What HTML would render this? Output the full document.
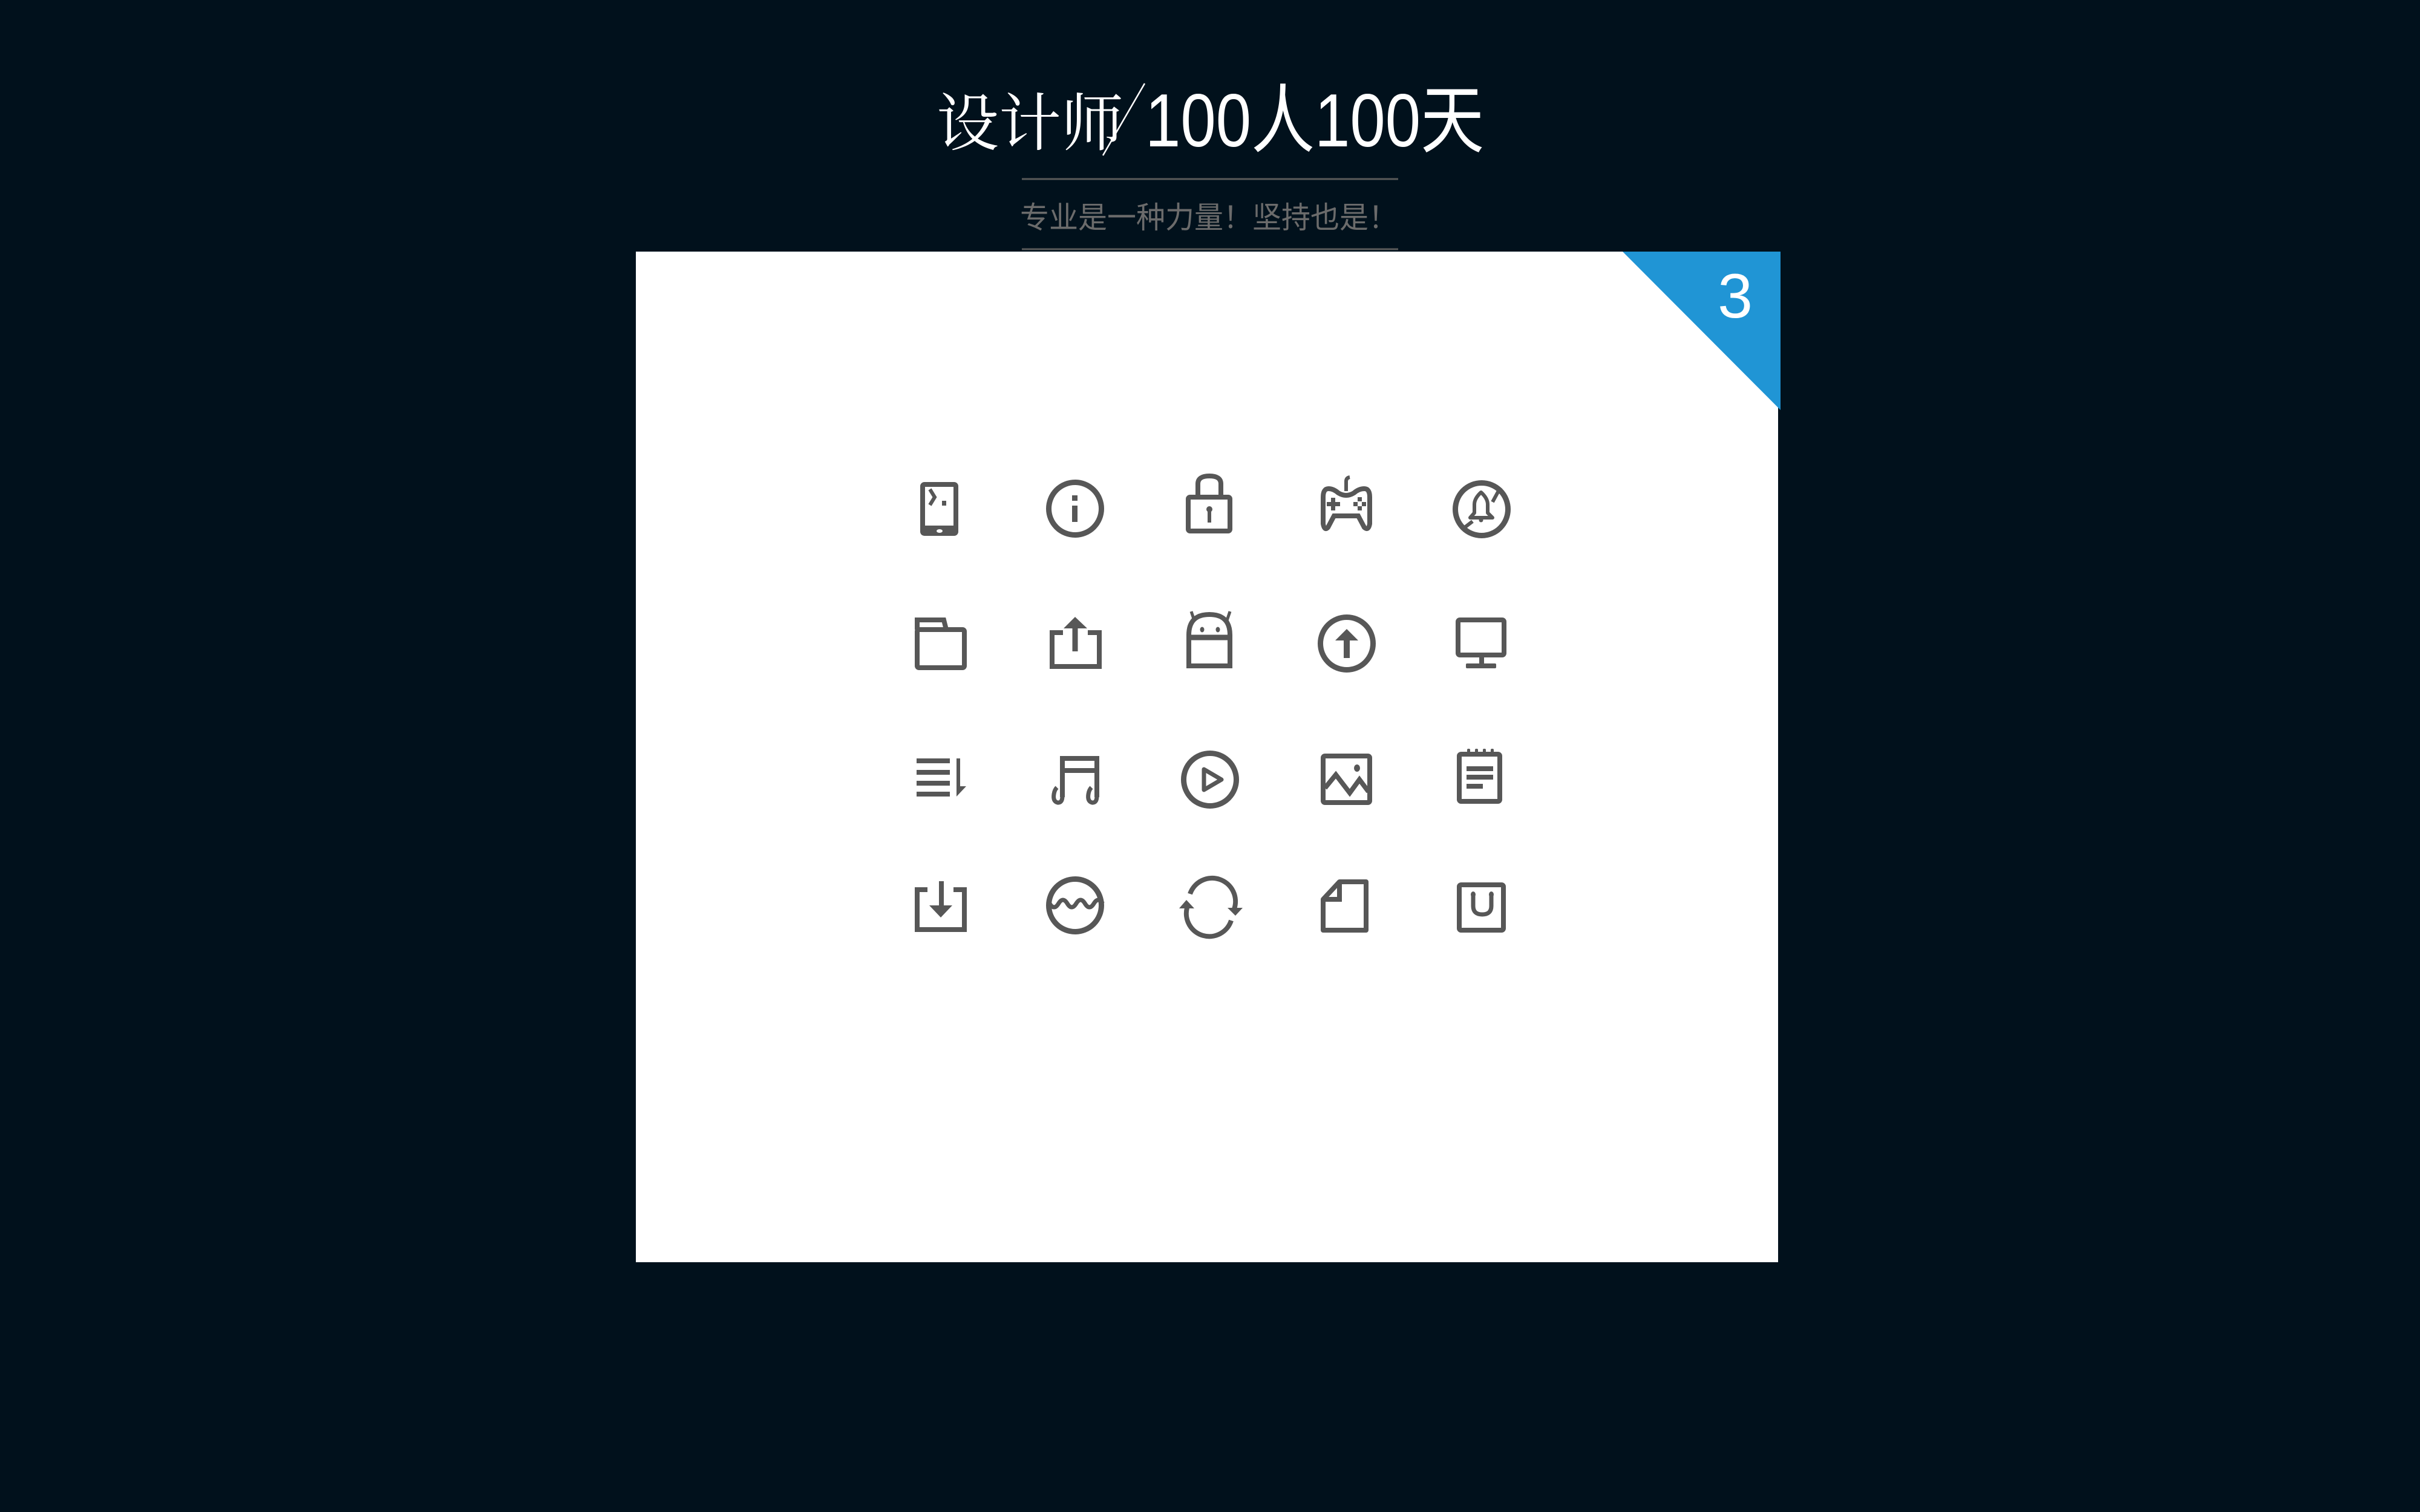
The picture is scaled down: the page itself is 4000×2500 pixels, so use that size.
<!DOCTYPE html>
<html><head><meta charset="utf-8"><style>
html,body{margin:0;padding:0;background:#01111c;width:4000px;height:2500px;overflow:hidden}
svg{display:block}
</style></head><body>
<svg width="4000" height="2500" viewBox="0 0 4000 2500" xmlns="http://www.w3.org/2000/svg">
<rect width="4000" height="2500" fill="#01111c"/>
<!-- header -->
<text x="1548" y="240" font-family="Noto Serif CJK SC, serif" font-size="104" fill="#fff" textLength="309" lengthAdjust="spacingAndGlyphs">设计师</text>
<line x1="1892" y1="138" x2="1823" y2="257" stroke="#fff" stroke-width="2.5"/>
<text x="1893" y="242" font-family="Liberation Sans, Noto Sans CJK SC, sans-serif" font-size="124" fill="#fff" textLength="560" lengthAdjust="spacingAndGlyphs">100人100天</text>
<line x1="1689" y1="296" x2="2311" y2="296" stroke="#5a5a5a" stroke-width="3"/>
<text x="1686" y="377" font-family="Liberation Sans, Noto Sans CJK SC, sans-serif" font-size="50" fill="#6b6b6b" textLength="624" lengthAdjust="spacingAndGlyphs">专业是一种力量！坚持也是！</text>
<line x1="1689" y1="412" x2="2311" y2="412" stroke="#5a5a5a" stroke-width="3"/>
<!-- card -->
<rect x="1051" y="416" width="1888" height="1671" fill="#fff"/>
<polygon points="2682,416 2943,416 2943,678" fill="#2095d5"/>
<text x="2868" y="525" text-anchor="middle" font-family="Liberation Sans, sans-serif" font-size="104" fill="#fff">3</text>

<g fill="none" stroke="#575757" stroke-width="8">
<!-- 1 phone -->
<rect x="1525" y="801" width="55" height="81" rx="3"/>
<line x1="1525" y1="874" x2="1580" y2="874" stroke-width="10"/>
<ellipse cx="1553" cy="878" rx="5" ry="3" fill="#fff" stroke="none"/>
<polyline points="1537,809 1545,822 1537,835" stroke-width="6"/>
<rect x="1557" y="828" width="7" height="8" fill="#575757" stroke="none"/>
<!-- 2 info -->
<circle cx="1777" cy="841" r="43.5" stroke-width="9"/>
<rect x="1772" y="819" width="9" height="9" fill="#575757" stroke="none"/>
<rect x="1772" y="836" width="9" height="27" fill="#575757" stroke="none"/>
<!-- 3 lock -->
<path d="M1980,820 V800 Q1980,787 1999,787 Q2018,787 2018,800 V820"/>
<rect x="1964" y="822" width="69" height="56" rx="3"/>
<circle cx="1999" cy="842" r="5" fill="#575757" stroke="none"/>
<rect x="1996" y="842" width="6" height="22" fill="#575757" stroke="none"/>
<!-- 4 gamepad -->
<path d="M2196,808 Q2187,808 2187,822 L2187,866 Q2189,878 2195,872 L2205,853 L2245,853 L2255,872 Q2262,878 2264,866 L2264,822 Q2264,808 2255,808 Q2246,808 2238,815 Q2225,823 2212,815 Q2204,808 2196,808Z"/>
<path d="M2225,812 V796 Q2225,790 2231,789" stroke-width="6"/>
<rect x="2193" y="830" width="22" height="7" fill="#575757" stroke="none"/>
<rect x="2200" y="823" width="7" height="21" fill="#575757" stroke="none"/>
<g fill="#575757" stroke="none"><rect x="2244" y="822" width="7" height="7"/><rect x="2244" y="837" width="7" height="7"/><rect x="2237" y="830" width="7" height="7"/><rect x="2251" y="830" width="7" height="7"/></g>
<!-- 5 bell slash -->
<circle cx="2449" cy="842" r="43.5" stroke-width="9"/>
<line x1="2480" y1="806" x2="2467" y2="830" stroke-width="6"/>
<line x1="2434" y1="862" x2="2421" y2="872" stroke-width="6"/>
<path d="M2430,856 L2437,848 V834 Q2437,824 2448,814 Q2459,824 2459,834 V848 L2467,856Z" stroke-width="6" stroke-linejoin="round"/>
<circle cx="2448" cy="860" r="3.5" fill="#575757" stroke="none"/>

<!-- 6 folder -->
<rect x="1516" y="1041" width="78" height="63" rx="3"/>
<path d="M1516,1041 V1025 H1560 L1564,1041"/>
<!-- 7 share -->
<path d="M1757,1046 H1739 V1102 H1817 V1046 H1798"/>
<line x1="1777" y1="1036" x2="1777" y2="1077" stroke-width="9"/>
<polygon points="1758,1039 1777,1020 1797,1039" fill="#575757" stroke="none"/>
<!-- 8 android -->
<path d="M1965,1050 Q1965,1016 1999,1016 Q2033,1016 2033,1050"/>
<rect x="1965" y="1054" width="68" height="47"/>
<line x1="1965" y1="1054" x2="2033" y2="1054" stroke-width="9"/>
<line x1="1969" y1="1011" x2="1974" y2="1026" stroke-width="5"/>
<line x1="2033" y1="1011" x2="2028" y2="1026" stroke-width="5"/>
<ellipse cx="1987" cy="1041" rx="3.5" ry="4.5" fill="#575757" stroke="none"/>
<ellipse cx="2013" cy="1041" rx="3.5" ry="4.5" fill="#575757" stroke="none"/>
<!-- 9 up circle -->
<circle cx="2226" cy="1064" r="43.5" stroke-width="9"/>
<rect x="2221" y="1056" width="10" height="32" fill="#575757" stroke="none"/>
<polygon points="2207,1059 2226,1040 2245,1059" fill="#575757" stroke="none"/>
<!-- 10 monitor -->
<rect x="2410" y="1025" width="76" height="58" rx="3"/>
<rect x="2445" y="1085" width="8" height="13" fill="#575757" stroke="none"/>
<rect x="2423" y="1097" width="50" height="8" rx="2" fill="#575757" stroke="none"/>

<!-- 11 list -->
<g fill="#575757" stroke="none">
<rect x="1515" y="1254" width="55" height="8"/><rect x="1515" y="1273" width="55" height="8"/>
<rect x="1515" y="1291" width="55" height="8"/><rect x="1515" y="1309" width="55" height="8"/>
<rect x="1581" y="1254" width="6" height="48"/>
<polygon points="1581,1300 1597,1300 1581,1317"/>
</g>
<!-- 12 music -->
<rect x="1756" y="1254" width="57" height="20"/>
<line x1="1756" y1="1250" x2="1756" y2="1318"/>
<line x1="1813" y1="1250" x2="1813" y2="1318"/>
<path d="M1756,1316 Q1756,1328 1748,1327 Q1740,1325 1742,1313 Q1743,1306 1747,1302" stroke-width="7"/>
<path d="M1813,1316 Q1813,1328 1805,1327 Q1797,1325 1799,1313 Q1800,1306 1804,1302" stroke-width="7"/>
<!-- 13 play -->
<circle cx="2000" cy="1289" r="43.5" stroke-width="9"/>
<path d="M1990,1272 L2019,1289 L1990,1306Z" stroke-linejoin="round" stroke-width="7"/>
<!-- 14 image -->
<rect x="2187" y="1250" width="77" height="77" rx="3"/>
<polyline points="2190,1303 2208,1281 2231,1311 2247,1289 2262,1309"/>
<ellipse cx="2243" cy="1270" rx="5" ry="6" fill="#575757" stroke="none"/>
<!-- 15 notepad -->
<rect x="2412" y="1247" width="67" height="78" rx="3"/>
<g fill="#575757" stroke="none">
<rect x="2425" y="1238" width="5" height="12" rx="2"/><rect x="2438" y="1238" width="5" height="12" rx="2"/>
<rect x="2451" y="1238" width="5" height="12" rx="2"/><rect x="2464" y="1238" width="5" height="12" rx="2"/>
<rect x="2424" y="1267" width="44" height="8"/><rect x="2424" y="1281" width="44" height="8"/><rect x="2424" y="1296" width="27" height="8"/>
</g>

<!-- 16 download -->
<path d="M1533,1471 H1516 V1537 H1594 V1471 H1576"/>
<line x1="1556" y1="1457" x2="1556" y2="1500" stroke-width="8"/>
<polygon points="1536,1497 1574,1497 1555,1517" fill="#575757" stroke="none"/>
<!-- 17 wave -->
<circle cx="1777" cy="1497" r="43.5" stroke-width="9"/>
<path d="M1735,1494 q7.3,12 14.6,0 t14.6,0 t14.6,0 t14.6,0 t14.6,0 t14.6,0" stroke-width="7"/>
<!-- 18 refresh -->
<path d="M1967,1478 A38,38 0 0 1 2040,1503" stroke-width="8"/>
<polygon points="2029,1501 2054,1501 2042,1514" fill="#575757" stroke="none"/>
<path d="M2035,1522 A38,38 0 0 1 1962,1501" stroke-width="8"/>
<polygon points="1949,1502 1974,1502 1961,1488" fill="#575757" stroke="none"/>
<!-- 19 file -->
<path d="M2187,1487 L2214,1458 H2258 V1538 H2187Z" stroke-linejoin="round"/>
<path d="M2214,1458 V1487 H2187"/>
<!-- 20 bag -->
<rect x="2412" y="1463" width="73" height="75" rx="3"/>
<path d="M2435,1478 V1498 Q2435,1512 2450,1512 Q2465,1512 2465,1498 V1478" stroke-width="7"/>
<ellipse cx="2435" cy="1479" rx="4" ry="5" fill="#575757" stroke="none"/>
<ellipse cx="2465" cy="1479" rx="4" ry="5" fill="#575757" stroke="none"/>
</g>
</svg>
</body></html>
